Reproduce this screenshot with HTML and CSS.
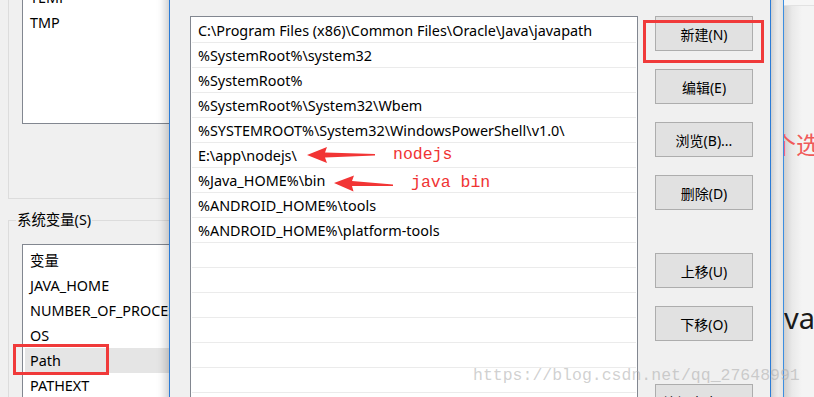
FILE: index.html
```html
<!DOCTYPE html>
<html lang="zh-CN">
<head>
    <meta charset="UTF-8">
    <title>编辑环境变量</title>
    <link rel="stylesheet" href="styles.css">
</head>
<body>

<div class="desktop">

    <!-- environment variables window, behind the dialog -->
    <div class="env-window">
        <fieldset class="group group-user">
            <div class="var-list user-list">
                <div class="var-row">变量</div>
                <div class="var-row">TEMP</div>
                <div class="var-row">TMP</div>
            </div>
        </fieldset>
        <fieldset class="group group-system">
            <legend>系统变量(S)</legend>
            <div class="var-list system-list">
                <div class="var-row">变量</div>
                <div class="var-row">JAVA_HOME</div>
                <div class="var-row">NUMBER_OF_PROCESSORS</div>
                <div class="var-row">OS</div>
                <div class="var-row selected">Path</div>
                <div class="var-row">PATHEXT</div>
            </div>
        </fieldset>
    </div>

    <!-- window on the right, mostly hidden -->
    <div class="back-window">
        <div class="back-edge"></div>
        <div class="back-main">
            <div class="back-top"></div>
            <div class="back-note">个选</div>
            <div class="back-title">va</div>
        </div>
    </div>

    <!-- edit path dialog -->
    <div class="path-dialog">
        <div class="path-list">
            <div class="path-row">C:\Program Files (x86)\Common Files\Oracle\Java\javapath</div>
            <div class="path-row">%SystemRoot%\system32</div>
            <div class="path-row">%SystemRoot%</div>
            <div class="path-row">%SystemRoot%\System32\Wbem</div>
            <div class="path-row">%SYSTEMROOT%\System32\WindowsPowerShell\v1.0\</div>
            <div class="path-row">E:\app\nodejs\</div>
            <div class="path-row">%Java_HOME%\bin</div>
            <div class="path-row">%ANDROID_HOME%\tools</div>
            <div class="path-row">%ANDROID_HOME%\platform-tools</div>
            <div class="path-row"></div>
            <div class="path-row"></div>
            <div class="path-row"></div>
            <div class="path-row"></div>
            <div class="path-row"></div>
            <div class="path-row"></div>
            <div class="path-row"></div>
        </div>
        <div class="button-col">
            <button class="btn">新建(N)</button>
            <button class="btn">编辑(E)</button>
            <button class="btn">浏览(B)...</button>
            <button class="btn">删除(D)</button>
            <button class="btn btn-group">上移(U)</button>
            <button class="btn">下移(O)</button>
            <button class="btn btn-group">编辑文本(T)...</button>
        </div>
    </div>

    <!-- annotations drawn over the screenshot -->
    <svg class="arrows" width="814" height="397" viewBox="0 0 814 397">
        <polygon points="307,155 327,147 325,152.5 375,154 375,155.5 325,157.5 327,163" fill="#f23535"/>
        <polygon points="334,183 354,175.5 352,181 393,184.5 393,186 352,186 353.5,191.5" fill="#f23535"/>
    </svg>
    <span class="note note-node">nodejs</span>
    <span class="note note-java">java bin</span>
    <div class="mark mark-path"></div>
    <div class="mark mark-new"></div>
    <div class="watermark">https://blog.csdn.net/qq_27648991</div>
</div>

</body>
</html>
```

FILE: styles.css
```css
* { box-sizing: border-box; }
body { margin: 0; font-family: "Noto Sans", "Noto Sans CJK SC", sans-serif; font-size: 14.4px; color: #000; }
.desktop { position: relative; width: 814px; height: 397px; overflow: hidden; background: #f0f0f0; }

/* left window */
.env-window { position: absolute; left: 0; top: -50px; width: 640px; height: 460px; padding-left: 8px; }
.group { margin: 0; border: 1px solid #dcdcdc; padding: 8px 0 0 13px; min-width: 0; }
.group-user { height: 249px; }
.group-system { margin-top: 12px; height: 240px; padding-top: 15px; }
.group-system legend { margin-left: -6px; padding: 0 1px; line-height: 18px; }
.var-list { width: 400px; background: white; border: 1px solid #828790; }
.user-list { height: 165px; }
.system-list { height: 200px; padding-top: 3px; }
.var-row { height: 25px; line-height: 25px; padding-left: 7px; white-space: nowrap; }
.var-row.selected { background: #e5e5e5; margin-left: 2px; padding-left: 5px; }

/* right window */
.back-window { position: absolute; left: 771px; top: 0; right: 0; bottom: 0; display: flex; }
.back-edge { width: 13px; background: linear-gradient(to right, #dcdcdc, #ececec 60%, #e4e4e4); border-right: 1px solid #3c8ee0; }
.back-main { flex: 1; position: relative; overflow: hidden; background: linear-gradient(to right, #cfcfcf, #e9e9e9 8px, #f4f4f4 18px); }
.back-top { height: 6px; background: #f6f6f6; border-bottom: 1px solid #e2e2e2; }
.back-note { margin: 124px 0 0 -12px; font-size: 24px; line-height: 30px; color: #f05a5a; white-space: nowrap; }
.back-title { margin: 141px 0 0 0; font-size: 29px; line-height: 34px; color: #1a1a1a; }

/* path dialog */
.path-dialog { position: absolute; left: 169px; top: -40px; width: 602px; height: 460px; display: flex; align-items: flex-start; gap: 17px; padding: 55px 17px 0 20px; background: #f0f0f0; border: 1px solid #2b7bd6; box-shadow: -3px 0 9px rgba(0, 0, 0, 0.22); }
.path-list { width: 448px; height: 440px; background: white; border: 1px solid #828790; padding: 1px; overflow: hidden; }
.path-row { height: 25px; line-height: 25px; padding-left: 6px; border-bottom: 1px solid #ebebeb; white-space: nowrap; }
.button-col { width: 98px; display: flex; flex-direction: column; gap: 18px; padding-top: 0; }
.btn { height: 35px; width: 98px; padding: 0; font: inherit; font-size: 14px; color: #000; background: #e1e1e1; border: 1px solid #adadad; }
.btn-group { margin-top: 25px; }

/* annotations */
.arrows { position: absolute; left: 0; top: 0; }
.note { position: absolute; font-family: "Liberation Mono", monospace; font-size: 16.5px; color: #f03333; }
.note-node { left: 393px; top: 145px; }
.note-java { left: 411px; top: 173px; }
.mark { position: absolute; border: 3px solid #f03a3a; }
.mark-path { left: 13px; top: 344px; width: 96px; height: 31px; }
.mark-new { left: 643px; top: 20px; width: 121px; height: 43px; }
.watermark { position: absolute; left: 473px; top: 366px; font-family: "Liberation Mono", monospace; font-size: 16.5px; color: rgba(170, 170, 170, 0.55); white-space: nowrap; }
```
